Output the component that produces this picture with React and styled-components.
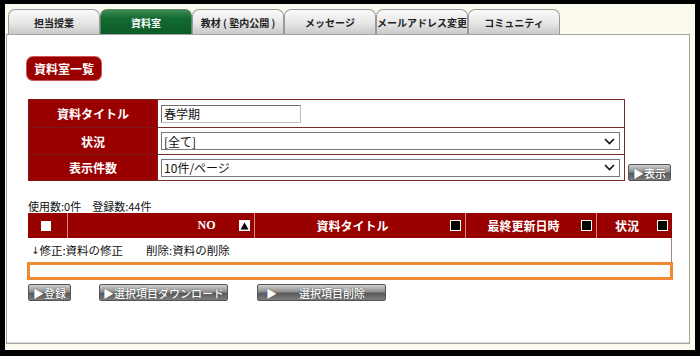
import React from 'react'
import styled, { createGlobalStyle, css } from 'styled-components'

const GlobalStyle = createGlobalStyle`
  html, body {
    margin: 0;
    padding: 0;
    background: #000;
  }
  body {
    font-family: "Noto Sans CJK JP", "Noto Sans", sans-serif;
    color: #222;
  }
  * { box-sizing: border-box; }
`

const Frame = styled.div`
  width: 700px;
  height: 356px;
  border-style: solid;
  border-color: #000;
  border-width: 4px 5px 6px 5px;
  background: #fcf9ef;
  padding: 5px 5px 0 1px;
  display: flex;
  flex-direction: column;
`

const Tabs = styled.div`
  display: flex;
  margin-left: 2px;
  height: 25px;
`

const Tab = styled.div`
  width: 92px;
  height: 25px;
  display: flex;
  align-items: center;
  justify-content: center;
  white-space: nowrap;
  font-size: 10px;
  font-weight: bold;
  color: #222;
  border: 1px solid #9a9a9a;
  border-bottom: none;
  border-radius: 7px 7px 0 0;
  background: linear-gradient(#fbfbfb, #e6e6e6 55%, #c9c9c9);

  ${props => props.active && css`
    color: #fff;
    border-color: #5c8a66;
    background: linear-gradient(#3d8a55, #136b31 35%, #0c5a27);
  `}
`

const Panel = styled.div`
  width: 684px;
  height: 310px;
  background: #fff;
  border: 1px solid #a3a3a3;
  box-shadow: inset 0 -1px 0 #d8d8d8;
  padding: 20px 18px 0 20px;
`

const Badge = styled.div`
  display: inline-flex;
  align-items: center;
  height: 23px;
  padding: 0 7px;
  background: #9a0000;
  color: #fff;
  font-size: 12px;
  font-weight: bold;
  border-radius: 6px;
  box-shadow: 0 0 0 1px #c55, 0 1px 1px rgba(0, 0, 0, 0.3);
`

const FormTable = styled.table`
  margin-top: 19px;
  width: 598px;
  border-collapse: collapse;
  margin-left: 1px;
`

const Label = styled.th`
  width: 130px;
  background: #990000;
  color: #fff;
  font-size: 12px;
  font-weight: bold;
  text-align: center;
  border: 1px solid #7a1a1a;
  height: ${props => props.h}px;
  padding: 0;
`

const Value = styled.td`
  border: 1px solid #7a2b2b;
  padding: 0 4px 0 3px;
  height: ${props => props.h}px;
`

const TextBox = styled.div`
  width: 140px;
  height: 18px;
  border: 1px solid #6e6e6e;
  border-right-color: #bbb;
  border-bottom-color: #bbb;
  font-size: 12px;
  line-height: 16px;
  padding-left: 2px;
  color: #111;
`

const SelectBox = styled.div`
  width: 459px;
  height: 18px;
  border: 1px solid #777;
  display: flex;
  align-items: center;
  justify-content: space-between;
  font-size: 12px;
  padding: 0 4px 0 2px;
  color: #111;
`

const Chevron = () => (
  <svg width="11" height="7" viewBox="0 0 11 7">
    <path d="M1 1 L5.5 5.5 L10 1" fill="none" stroke="#111" strokeWidth="1.6" />
  </svg>
)

const FormRow = styled.div`
  display: flex;
  align-items: flex-end;
`

const GrayButton = styled.div`
  height: 17px;
  width: ${props => props.w}px;
  display: flex;
  align-items: center;
  justify-content: ${props => (props.spread ? 'flex-start' : 'center')};
  gap: ${props => (props.spread ? '22px' : '0')};
  padding-left: ${props => (props.spread ? '8px' : '0')};
  font-size: 11px;
  font-weight: 500;
  color: #fff;
  border: 1px solid #555;
  border-radius: 2px;
  background: linear-gradient(#d0d0d0, #8e8e8e 45%, #5a5a5a 55%, #7c7c7c);
  text-shadow: 0 0 1px #222;
`

const Counts = styled.div`
  margin-top: 18px;
  margin-left: 1px;
  font-size: 11px;
  color: #111;
  height: 14px;
  line-height: 14px;
`

const Header = styled.div`
  display: grid;
  grid-template-columns: 39px 187px 211px 131px 76px;
  width: 644px;
  height: 25px;
  background: #990000;
  margin-left: 1px;
`

const HeadCell = styled.div`
  display: flex;
  align-items: center;
  color: #fff;
  font-size: 12px;
  font-weight: bold;
  padding-left: ${props => props.pl || 0}px;
  padding-right: 4px;
  border-left: ${props => (props.first ? 'none' : '1px solid #d98a8a')};
  font-family: ${props => (props.serif ? '"Liberation Serif", serif' : 'inherit')};
`

const HeadText = styled.span`
  flex: 1;
  text-align: center;
`

const WhiteCheck = styled.span`
  width: 10px;
  height: 10px;
  background: #fff;
  margin: 0 auto;
`

const SortBox = styled.span`
  width: 11px;
  height: 11px;
  border: 1px solid #fff;
  background: #000;
  display: flex;
  align-items: center;
  justify-content: center;
`

const SortUp = styled(SortBox)`
  background: #fff;
`

const InfoRow = styled.div`
  width: 644px;
  height: 24px;
  margin-left: 1px;
  border-right: 1px solid #a48585;
  font-size: 11.5px;
  color: #111;
  display: flex;
  align-items: center;
  padding-left: 3px;
  white-space: pre;
`

const Arrow = styled.span`
  font-family: "DejaVu Sans", sans-serif;
  font-size: 10px;
  color: #111;
`

const Orange = styled.div`
  width: 646px;
  height: 18px;
  border: 3px solid #f08a32;
`

const Buttons = styled.div`
  display: flex;
  margin-top: 4px;
  margin-left: 1px;
`

const Spacer = styled.div`
  width: ${props => props.w}px;
`

const tabs = ['担当授業', '資料室', '教材 ( 塾内公開 )', 'メッセージ', 'メールアドレス変更', 'コミュニティ']

export default function App() {
  return (
    <>
      <GlobalStyle />
      <Frame>
        <Tabs>
          {tabs.map((t, i) => (
            <Tab key={t} active={i === 1}>{t}</Tab>
          ))}
        </Tabs>
        <Panel>
          <Badge>資料室一覧</Badge>
          <FormRow>
            <FormTable>
              <tbody>
                <tr>
                  <Label h={28}>資料タイトル</Label>
                  <Value h={28}><TextBox>春学期</TextBox></Value>
                </tr>
                <tr>
                  <Label h={27}>状況</Label>
                  <Value h={27}><SelectBox>[全て]<Chevron /></SelectBox></Value>
                </tr>
                <tr>
                  <Label h={26}>表示件数</Label>
                  <Value h={26}><SelectBox>10件/ページ<Chevron /></SelectBox></Value>
                </tr>
              </tbody>
            </FormTable>
            <Spacer w={3} />
            <GrayButton w={43}>▶表示</GrayButton>
          </FormRow>
          <Counts>使用数:0件　登録数:44件</Counts>
          <Header>
            <HeadCell first><WhiteCheck /></HeadCell>
            <HeadCell serif pl={106}>
              <HeadText>NO</HeadText>
              <SortUp>
                <svg width="9" height="8" viewBox="0 0 9 8"><path d="M4.5 0.5 L8.5 7.5 L0.5 7.5 Z" fill="#000" /></svg>
              </SortUp>
            </HeadCell>
            <HeadCell><HeadText>資料タイトル</HeadText><SortBox /></HeadCell>
            <HeadCell><HeadText>最終更新日時</HeadText><SortBox /></HeadCell>
            <HeadCell><HeadText>状況</HeadText><SortBox /></HeadCell>
          </Header>
          <InfoRow><Arrow>↓</Arrow>{'修正:資料の修正　　削除:資料の削除'}</InfoRow>
          <Orange />
          <Buttons>
            <GrayButton w={43}>▶登録</GrayButton>
            <Spacer w={28} />
            <GrayButton w={129}>▶選択項目ダウンロード</GrayButton>
            <Spacer w={29} />
            <GrayButton w={129} spread><span>▶</span><span>選択項目削除</span></GrayButton>
          </Buttons>
        </Panel>
      </Frame>
    </>
  )
}
